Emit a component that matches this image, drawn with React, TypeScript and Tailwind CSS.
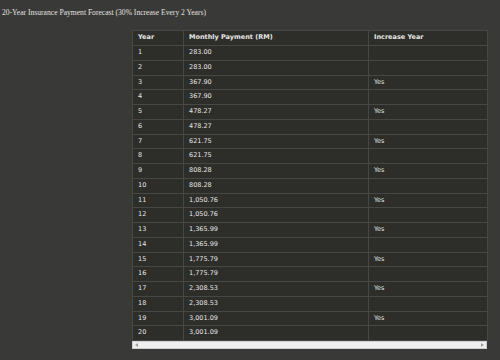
import React from "react";

const rows: [number, string, string][] = [
  [1, "283.00", ""],
  [2, "283.00", ""],
  [3, "367.90", "Yes"],
  [4, "367.90", ""],
  [5, "478.27", "Yes"],
  [6, "478.27", ""],
  [7, "621.75", "Yes"],
  [8, "621.75", ""],
  [9, "808.28", "Yes"],
  [10, "808.28", ""],
  [11, "1,050.76", "Yes"],
  [12, "1,050.76", ""],
  [13, "1,365.99", "Yes"],
  [14, "1,365.99", ""],
  [15, "1,775.79", "Yes"],
  [16, "1,775.79", ""],
  [17, "2,308.53", "Yes"],
  [18, "2,308.53", ""],
  [19, "3,001.09", "Yes"],
  [20, "3,001.09", ""],
];

export default function App() {
  return (
    <div className="w-[500px] h-[360px] bg-[#393937] overflow-hidden relative">
      <div
        className="pl-[2px] pt-[8px] h-[30px] text-[7.6px] leading-[10px] text-[#e2e2e0]"
        style={{ fontFamily: '"Liberation Serif", serif' }}
      >
        20-Year Insurance Payment Forecast (30% Increase Every 2 Years)
      </div>
      <div className="ml-[132px] w-[355px]" style={{ fontFamily: '"DejaVu Sans", sans-serif' }}>
        <table className="w-[355px] border-collapse bg-[#2d2d2a] text-[6.5px] text-[#e6e6e4] table-fixed">
          <colgroup>
            <col className="w-[51px]" />
            <col className="w-[185px]" />
            <col className="w-[119px]" />
          </colgroup>
          <thead>
            <tr className="h-[15px]">
              <th className="border border-[#474744] text-left font-bold pl-[5px] p-0">Year</th>
              <th className="border border-[#474744] text-left font-bold pl-[5px] p-0">Monthly Payment (RM)</th>
              <th className="border border-[#474744] text-left font-bold pl-[5px] p-0">Increase Year</th>
            </tr>
          </thead>
          <tbody>
            {rows.map(([y, p, inc]) => (
              <tr key={y} className="h-[14.75px]">
                <td className="border border-[#474744] pl-[5px] p-0">{y}</td>
                <td className="border border-[#474744] pl-[5px] p-0">{p}</td>
                <td className="border border-[#474744] pl-[5px] p-0">{inc}</td>
              </tr>
            ))}
          </tbody>
        </table>
        <div className="h-[8px] bg-[#efefef] border border-[#cfcfcf] flex items-center justify-between px-[2px]">
          <span className="w-0 h-0 border-y-[2px] border-y-transparent border-r-[3px] border-r-[#a0a0a0]" />
          <span className="w-0 h-0 border-y-[2px] border-y-transparent border-l-[3px] border-l-[#a0a0a0]" />
        </div>
      </div>
    </div>
  );
}
